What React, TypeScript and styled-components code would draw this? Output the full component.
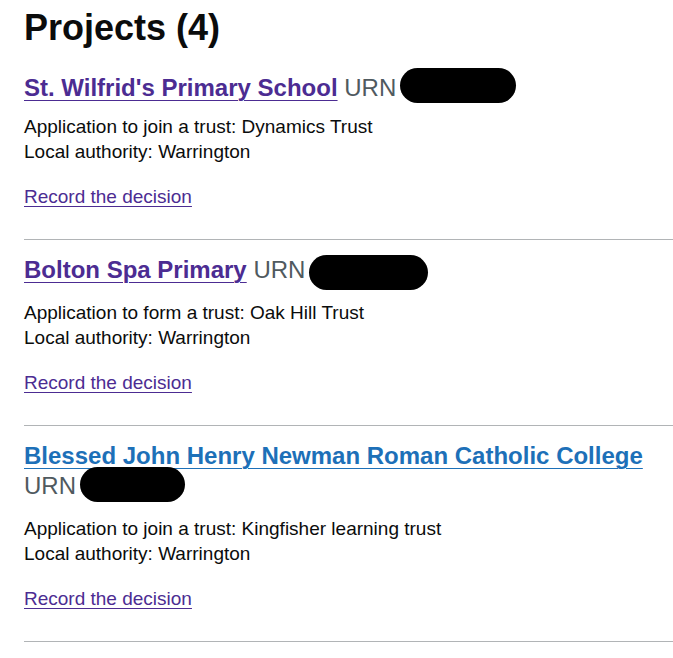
import React from "react";
import styled, { createGlobalStyle } from "styled-components";

const GlobalStyle = createGlobalStyle`
  html, body {
    margin: 0;
    padding: 0;
    background: #ffffff;
  }
  body {
    font-family: "Liberation Sans", Arial, sans-serif;
    color: #0b0c0c;
    -webkit-font-smoothing: antialiased;
  }
`;

const Page = styled.main`
  padding: 8px 0 0 24px;
`;

const Title = styled.h1`
  margin: 0 0 6px;
  font-size: 36px;
  line-height: 40px;
  font-weight: 700;
  color: #0b0c0c;
`;

const List = styled.ul`
  list-style: none;
  margin: 0;
  padding: 0;
`;

const Heading = styled.h2`
  margin: 0 0 15px;
  font-size: 24px;
  line-height: 30px;
  font-weight: 700;
`;

const Item = styled.li`
  padding: 15px 0 30px;
  border-bottom: 1px solid #b1b4b6;

  &:first-child ${Heading} {
    margin-top: 4px;
    margin-bottom: 11px;
  }
`;

const HeadingLink = styled.a<{ $visited?: boolean }>`
  color: ${(p) => (p.$visited ? "#4c2c92" : "#1d70b8")};
  text-decoration: underline;
  text-decoration-thickness: 1px;
  text-underline-offset: 0.1578em;
`;

const Urn = styled.span`
  font-weight: 400;
  color: #505a5f;
`;

const Redaction = styled.span<{ $w: number; $drop: number }>`
  display: inline-block;
  width: ${(p) => p.$w}px;
  height: 35px;
  margin: -5px 0 -12px 4px;
  border-radius: 18px;
  background: #000000;
  vertical-align: ${(p) => 5 - p.$drop}px;
`;

const Body = styled.p`
  margin: 0 0 20px;
  font-size: 19px;
  line-height: 25px;
  color: #0b0c0c;
  &:last-child {
    margin-bottom: 0;
  }
`;

const ActionLink = styled.a`
  color: #4c2c92;
  text-decoration: underline;
  text-decoration-thickness: 1px;
  text-underline-offset: 0.1578em;
`;

type Project = {
  name: string;
  visited: boolean;
  redactWidth: number;
  redactDrop: number;
  route: string;
  trust: string;
  authority: string;
};

const projects: Project[] = [
  {
    name: "St. Wilfrid's Primary School",
    visited: true,
    redactWidth: 116,
    redactDrop: 0,
    route: "Application to join a trust",
    trust: "Dynamics Trust",
    authority: "Warrington",
  },
  {
    name: "Bolton Spa Primary",
    visited: true,
    redactWidth: 119,
    redactDrop: 5,
    route: "Application to form a trust",
    trust: "Oak Hill Trust",
    authority: "Warrington",
  },
  {
    name: "Blessed John Henry Newman Roman Catholic College",
    visited: false,
    redactWidth: 105,
    redactDrop: 1,
    route: "Application to join a trust",
    trust: "Kingfisher learning trust",
    authority: "Warrington",
  },
];

export default function App() {
  return (
    <>
      <GlobalStyle />
      <Page>
        <Title>Projects (4)</Title>
        <List>
          {projects.map((p) => (
            <Item key={p.name}>
              <Heading>
                <HeadingLink href="#" $visited={p.visited}>
                  {p.name}
                </HeadingLink>{" "}
                <Urn>
                  URN
                  <Redaction $w={p.redactWidth} $drop={p.redactDrop} />
                </Urn>
              </Heading>
              <Body>
                {p.route}: {p.trust}
                <br />
                Local authority: {p.authority}
              </Body>
              <Body>
                <ActionLink href="#">Record the decision</ActionLink>
              </Body>
            </Item>
          ))}
        </List>
      </Page>
    </>
  );
}
